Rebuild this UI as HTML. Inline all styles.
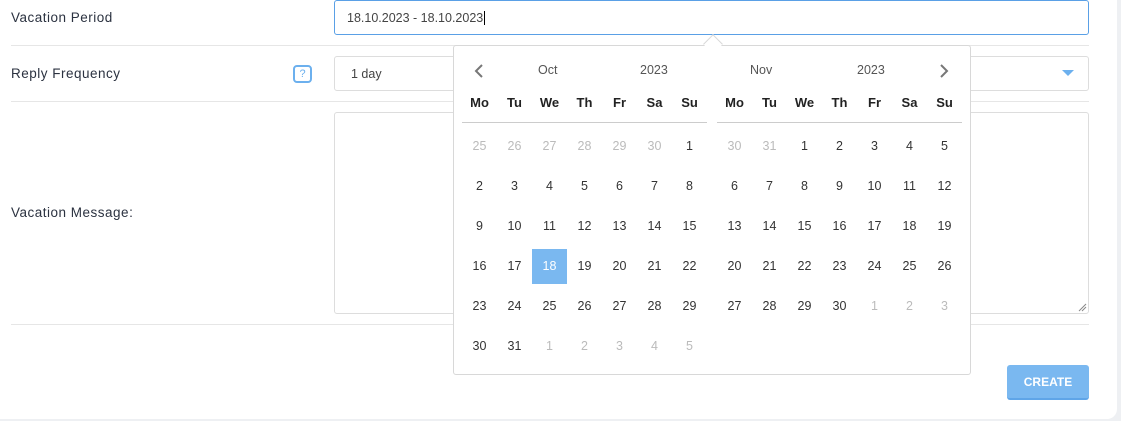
<!DOCTYPE html>
<html><head><style>
*{box-sizing:border-box;margin:0;padding:0}
body{width:1121px;height:421px;background:#eef0f3;font-family:"Liberation Sans",sans-serif;color:#333;position:relative;overflow:hidden}
.card{position:absolute;left:0;top:-10px;width:1117px;height:429px;background:#fff;border-radius:0 0 10px 0}
.a{position:absolute}
.lbl{font-size:13.5px;color:#2b3240;letter-spacing:.5px}
.hr{position:absolute;left:11px;width:1078px;height:1px;background:#e6e6e6}
.box{position:absolute;left:334px;width:755px;border:1px solid #ddd;border-radius:3px;background:#fff}
.cal{position:absolute;left:453px;top:45px;width:518px;height:330px;background:#fff;border:1px solid #d8d8d8;border-radius:3px}
.c{position:absolute;width:35px;height:35px;line-height:35px;text-align:center;font-size:12.5px;color:#333}
.h{font-weight:bold;color:#222;font-size:13px}
.g{color:#bbb}
.sel{background:#7ab8f0;color:#fff}
</style></head><body>
<div class="card"></div>
<div class="a lbl" style="left:11px;top:10px">Vacation Period</div>
<div class="a lbl" style="left:11px;top:66px">Reply Frequency</div>
<div class="a lbl" style="left:11px;top:205px">Vacation Message:</div>
<div class="a" style="left:293px;top:65px;width:19px;height:18px;border:2px solid #6cb0ee;border-radius:4px;color:#6cb0ee;font-size:11px;text-align:center;line-height:14px">?</div>
<div class="hr" style="top:45px"></div>
<div class="hr" style="top:101px"></div>
<div class="hr" style="top:324px"></div>
<div class="box" style="top:0;height:35px;border-color:#5aa0e6;font-size:12.5px;padding:10px 12px;color:#444">18.10.2023 - 18.10.2023<span style="border-left:1px solid #000;margin-left:1px"></span></div>
<div class="box" style="top:56px;height:35px;font-size:12.5px;padding:10px 16px;color:#444">1 day</div>
<div class="a" style="left:1062px;top:70px;width:0;height:0;border-left:6px solid transparent;border-right:6px solid transparent;border-top:6px solid #6cb0ee"></div>
<div class="box" style="top:112px;height:202px"></div>
<svg class="a" style="left:1078px;top:303px" width="9" height="9"><path d="M1 8 L8 1 M4 8 L8 4" stroke="#888" stroke-width="1"/></svg>
<div class="a" style="left:1007px;top:365px;width:82px;height:35px;background:#7ab8f0;border-radius:3px;border-bottom:2px solid #5fa5e8;color:#fff;font-weight:bold;font-size:12px;text-align:center;line-height:34px">CREATE</div>
<div class="cal"></div>
<div class="a" style="left:706px;top:37px;width:14px;height:14px;background:#fff;border-left:1px solid #d8d8d8;border-top:1px solid #d8d8d8;transform:rotate(45deg)"></div>
<svg class="a" style="left:473px;top:63px" width="12" height="16"><path d="M9 2 L3 8 L9 14" stroke="#777" stroke-width="2" fill="none"/></svg>
<svg class="a" style="left:938px;top:63px" width="12" height="16"><path d="M3 2 L9 8 L3 14" stroke="#777" stroke-width="2" fill="none"/></svg>
<div class="a" style="left:538px;top:63px;font-size:12.5px;color:#555">Oct</div>
<div class="a" style="left:640px;top:63px;font-size:12.5px;color:#555">2023</div>
<div class="a" style="left:750px;top:63px;font-size:12.5px;color:#555">Nov</div>
<div class="a" style="left:857px;top:63px;font-size:12.5px;color:#555">2023</div>
<div class="a" style="left:462px;top:122px;width:245px;height:1px;background:#ccc"></div>
<div class="a" style="left:717px;top:122px;width:245px;height:1px;background:#ccc"></div>
<div id="g"></div>
<script>
var d=["Mo","Tu","We","Th","Fr","Sa","Su"],o="";
function m(x0,days){for(var i=0;i<7;i++)o+='<div class="c h" style="left:'+(x0+i*35)+'px;top:85px">'+d[i]+'</div>';
days.forEach(function(v,k){var r=Math.floor(k/7),c=k%7;var cls=v[1]||"";o+='<div class="c '+cls+'" style="left:'+(x0+c*35)+'px;top:'+(129+r*40)+'px">'+v[0]+'</div>'});}
var a=[];[25,26,27,28,29,30].forEach(function(n){a.push([n,"g"])});for(var n=1;n<=31;n++)a.push([n,n==18?"sel":""]);[1,2,3,4,5].forEach(function(n){a.push([n,"g"])});
m(462,a);
var b=[[30,"g"],[31,"g"]];for(n=1;n<=30;n++)b.push([n]);[1,2,3].forEach(function(n){b.push([n,"g"])});
m(717,b);
document.getElementById("g").innerHTML=o;
</script>
</body></html>
